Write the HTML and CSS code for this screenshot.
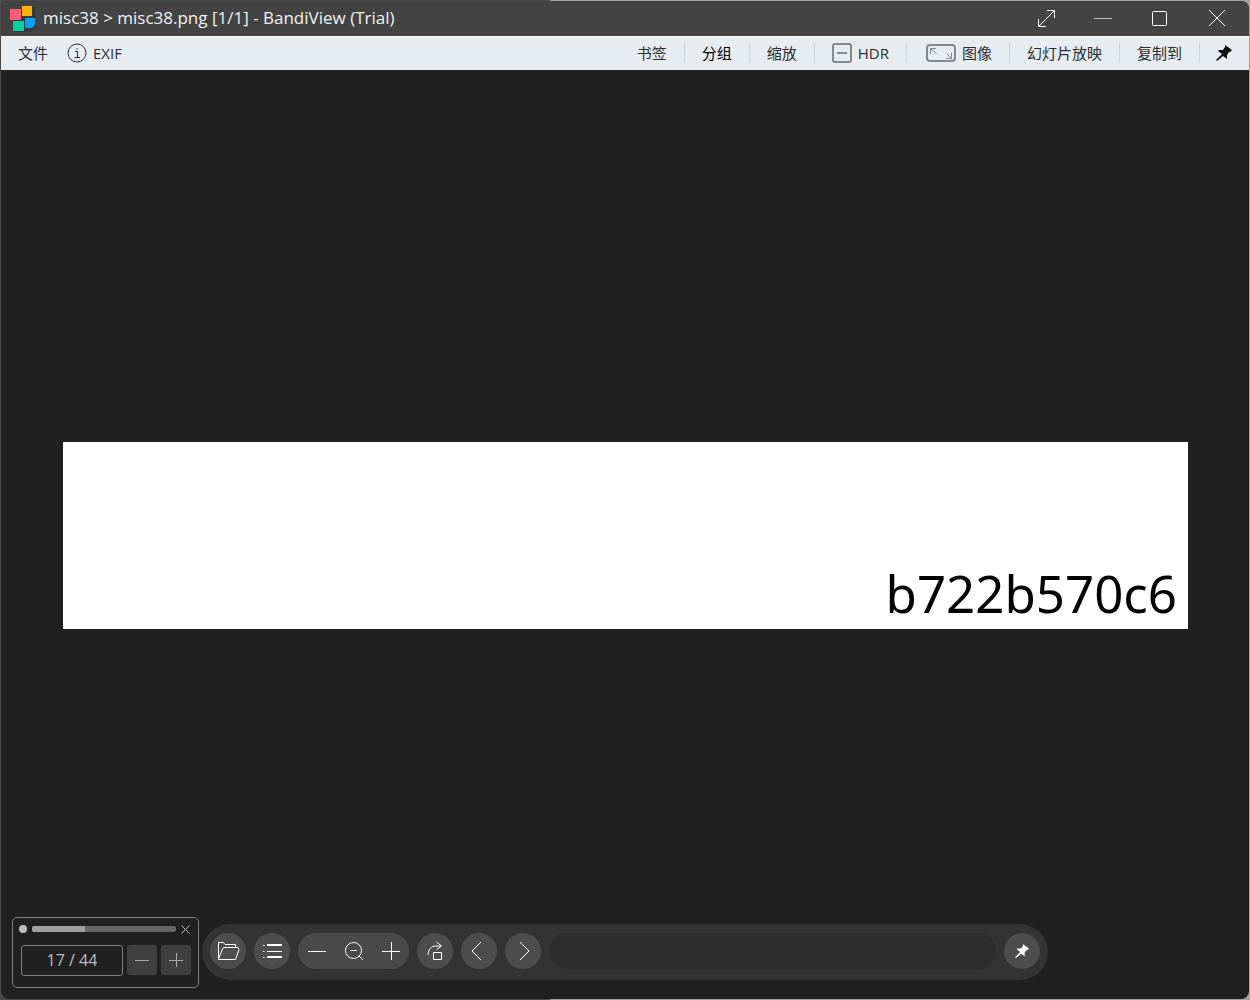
FILE: index.html
```html
<!DOCTYPE html>
<html lang="zh-CN">
<head>
<meta charset="utf-8">
<meta name="viewport" content="width=device-width, initial-scale=1">
<title>BandiView</title>
<link rel="stylesheet" href="styles.css">
</head>
<body>
<div class="window">
  <header class="titlebar">
    <svg class="logo" width="27" height="27" viewBox="0 0 27 27" aria-hidden="true">
      <path fill="#2b3038" d="M2 5h11V2h12v14h1v7l-4 4H4V17H2z" opacity=".55"/>
      <path fill="#ff5c7c" d="M0 4h11v11H0z"/>
      <path fill="#ffb300" d="M12 1h10v10H12z"/>
      <path fill="#00d1a0" d="M3 16h11v10H3z"/>
      <path fill="#00a2f2" d="M15 13h10v5c0 3-2 5-5 5h-5z"/>
    </svg>
    <h1 class="title">misc38 &gt; misc38.png [1/1] - BandiView (Trial)</h1>
    <div class="caption">
      <button class="cap" aria-label="全屏"><svg width="20" height="20" viewBox="0 0 20 20"><path d="M3 18 18 3M11 2.500h7.500V10M2.500 11v7.500H10"/></svg></button>
      <button class="cap" aria-label="最小化"><svg width="20" height="20" viewBox="0 0 20 20"><path d="M1 10.500h18" stroke="#bbb"/></svg></button>
      <button class="cap" aria-label="最大化"><svg width="20" height="20" viewBox="0 0 20 20"><rect x="2.500" y="3.500" width="14" height="14" rx="1"/></svg></button>
      <button class="cap" aria-label="关闭"><svg width="20" height="20" viewBox="0 0 20 20"><path d="m2 2 16 16M18 2 2 18"/></svg></button>
    </div>
  </header>
  <nav class="menubar">
    <button class="item file">文件</button>
    <button class="item exif"><svg width="20" height="20" viewBox="0 0 20 20"><circle cx="10" cy="10" r="9"/><path d="M8 8.500h2.500v6M7.500 14.500h5.500M10 5v1.500"/></svg>EXIF</button>
    <div class="tools">
      <button class="item">书签</button>
      <button class="item strong">分组</button>
      <button class="item">缩放</button>
      <button class="item hdr"><svg class="soft" width="20" height="20" viewBox="0 0 20 20"><rect x="1" y="1" width="18" height="18" rx="2"/><path d="M5 10h10"/></svg>HDR</button>
      <button class="item image"><svg class="soft" width="30" height="18" viewBox="0 0 30 18"><rect x="1" y="1" width="28" height="16" rx="3"/><path d="M4.500 10V4.500H10M4.500 4.500l6 5M25.500 8.500v6H20M25.500 14.500l-5-5"/></svg>图像</button>
      <button class="item">幻灯片放映</button>
      <button class="item">复制到</button>
      <button class="item fix" aria-label="固定"><svg class="pin" width="16" height="16" viewBox="0 0 16 16"><path d="M9 0l7 5-2 2h-1l-2 3v4l-4-3-6 5-1-1 6-6-4-3 1-1 4 0 2-3z"/></svg></button>
    </div>
  </nav>
  <main class="viewer">
    <div class="picture">b722b570c6</div>
    <div class="dock">
      <section class="slideshow" aria-label="幻灯片">
        <div class="progress-row">
          <span class="dot"></span>
          <progress class="bar" value="37" max="100" aria-label="进度"></progress>
          <button class="close" aria-label="停止"><svg width="9" height="9" viewBox="0 0 9 9"><path d="m.5.500 8 8M8.500.500l-8 8"/></svg></button>
        </div>
        <div class="count-row">
          <input class="count" type="text" value="17 / 44" aria-label="页码">
          <button class="step" aria-label="减少"><svg width="16" height="16" viewBox="0 0 16 16"><path d="M1 8.500h14"/></svg></button>
          <button class="step" aria-label="增加"><svg width="16" height="16" viewBox="0 0 16 16"><path d="M1 8.500h14M8.500 1v14"/></svg></button>
        </div>
      </section>
      <div class="controls">
        <button class="round" aria-label="打开"><svg width="24" height="24" viewBox="0 0 24 24"><path d="M2.500 19V3.500h5l1.500 2h10.500v3M2.500 20.500h17l3.500-10-1-2H7.500l-1 1.500-4 10z"/></svg></button>
        <button class="round" aria-label="列表"><svg width="24" height="24" viewBox="0 0 24 24"><path stroke-width="2" d="M7 6h15M7 18h15"/><path d="M7 12.500h15M3 6.500h1.500M3 12.500h1.500M3 18.500h1.500"/></svg></button>
        <div class="zoom">
          <button aria-label="缩小"><svg width="20" height="20" viewBox="0 0 20 20"><path d="M1 10.500h18"/></svg></button>
          <button aria-label="缩放"><svg width="20" height="20" viewBox="0 0 20 20"><circle cx="9.500" cy="9.500" r="8"/><path d="M6 9.500h7M15 15l4 4"/></svg></button>
          <button aria-label="放大"><svg width="20" height="20" viewBox="0 0 20 20"><path d="M1 10.500h18M10.500 1v18"/></svg></button>
        </div>
        <button class="round" aria-label="旋转"><svg width="20" height="20" viewBox="0 0 20 20"><path d="M3 14c0-5 3-9 8-9h5M11.500 1l5 4-5 3.500M8.500 11.500h8v7h-8z"/></svg></button>
        <button class="round" aria-label="上一张"><svg width="20" height="20" viewBox="0 0 20 20"><path d="m12 1-9 9 9 9"/></svg></button>
        <button class="round" aria-label="下一张"><svg width="20" height="20" viewBox="0 0 20 20"><path d="m7 1 9 9-9 9"/></svg></button>
        <div class="trough"></div>
        <button class="round" aria-label="固定工具栏"><svg class="pin" width="14" height="14" viewBox="0 0 16 16"><path d="M9 0l7 5-2 2h-1l-2 3v4l-4-3-6 5-1-1 6-6-4-3 1-1 4 0 2-3z"/></svg></button>
      </div>
    </div>
  </main>
</div>
</body>
</html>
```

FILE: styles.css
```css
* { box-sizing: border-box; }

body {
  margin: 0;
  min-height: 100vh;
  padding: 1px;
  display: flex;
  background: linear-gradient(90deg, #4a4a4a 44%, #a2a2a2 44%);
  font-family: "Open Sans", "Noto Sans CJK SC", sans-serif;
}

button {
  border: 0;
  padding: 0;
  margin: 0;
  background: none;
  color: inherit;
  font: inherit;
  display: flex;
  align-items: center;
  justify-content: center;
}

svg {
  display: block;
  flex: none;
  fill: none;
  stroke: currentColor;
}

.window {
  flex: 1;
  min-width: 0;
  display: flex;
  flex-direction: column;
  border-radius: 8px;
  overflow: hidden;
  background: #202020;
}

.titlebar {
  height: 35px;
  padding: 0 4px 2px 9px;
  display: flex;
  align-items: center;
  gap: 6px;
  background: #434343;
  color: #fff;
}

.logo {
  margin-top: 2px;
  stroke: none;
}

.title {
  flex: 1;
  margin: 0;
  color: #f2f2f2;
  font-size: 17px;
  font-weight: 400;
  line-height: 24px;
  white-space: nowrap;
}

.caption { display: flex; }

.cap {
  width: 57px;
  height: 33px;
}

.menubar {
  height: 34px;
  padding-bottom: 2px;
  display: flex;
  align-items: center;
  border-top: 1px solid #fbfcfd;
  background: #e7ecf0;
  color: #2c2f32;
  font-size: 15px;
  line-height: 22px;
  white-space: nowrap;
}

.file { padding: 0 19px 0 17px; }
.exif { gap: 6px; }

.tools {
  margin-left: auto;
  display: flex;
  align-items: center;
}

.tools .item {
  height: 20px;
  padding: 0 17px;
  border-left: 1px solid #ced3d6;
}

.tools .item:first-child { border-left: 0; }
.tools .strong { color: #000; }
.tools .hdr { gap: 6px; }
.tools .image { gap: 6px; padding-left: 19px; }
.tools .fix { padding-left: 16px; }

.soft {
  color: #85898d;
  stroke-width: 2;
}

.soft path { stroke-width: 1; }
.hdr .soft path { stroke-width: 2; }
.hdr .soft rect,
.image .soft rect { stroke-width: 2; }

.pin {
  fill: currentColor;
  stroke: none;
}

.menubar .pin { color: #111; }

.viewer {
  flex: 1;
  position: relative;
  display: flex;
  align-items: center;
  padding: 2px 61px 0 62px;
}

.picture {
  flex: 1;
  aspect-ratio: 1125 / 187;
  display: flex;
  align-items: flex-end;
  justify-content: flex-end;
  padding: 0 11px 6px 0;
  background: #fff;
  color: #000;
  font-family: "Noto Sans", sans-serif;
  font-size: 51px;
  line-height: 60px;
}

.dock {
  position: absolute;
  left: 11px;
  right: 201px;
  bottom: 11px;
  display: flex;
  align-items: flex-start;
  gap: 3px;
}

.slideshow {
  width: 187px;
  padding: 6px 7px 11px 8px;
  border: 1px solid #7d7d7d;
  border-radius: 5px;
  color: #bdbdbd;
}

.progress-row {
  height: 10px;
  margin: 0 0 11px -2px;
  display: flex;
  align-items: center;
  gap: 5px;
}

.dot {
  width: 8px;
  height: 8px;
  border-radius: 50%;
  background: #bdbdbd;
}

.bar {
  flex: 1;
  min-width: 0;
  height: 6px;
  border: 0;
  border-radius: 2px;
  overflow: hidden;
  appearance: none;
  background: #666;
}

.bar::-webkit-progress-bar { background: #666; }
.bar::-webkit-progress-value { background: #a0a0a0; }
.bar::-moz-progress-bar { background: #a0a0a0; }

.close { margin-right: 1px; }

.count-row {
  display: flex;
  gap: 4px;
}

.count {
  flex: 1;
  min-width: 0;
  height: 31px;
  padding: 0 0 2px;
  border: 1px solid #7d7d7d;
  border-radius: 3px;
  background: none;
  color: #bdbdbd;
  font: inherit;
  font-size: 16px;
  text-align: center;
}

.step {
  width: 30px;
  height: 30px;
  border-radius: 3px;
  background: #404040;
  color: #aaa;
}

.controls {
  flex: 1;
  height: 56px;
  margin-top: 7px;
  padding: 0 8px 2px;
  display: flex;
  align-items: center;
  gap: 8px;
  border-radius: 28px;
  background: #333;
  color: #fff;
}

.round {
  flex: none;
  width: 36px;
  height: 36px;
  border-radius: 50%;
  background: #4d4d4d;
}

.zoom {
  display: flex;
  border-radius: 18px;
  background: #4a4a4a;
}

.zoom button {
  width: 37px;
  height: 36px;
}

.trough {
  flex: 1;
  height: 36px;
  border-radius: 18px;
  background: #2d2d2d;
}
```
